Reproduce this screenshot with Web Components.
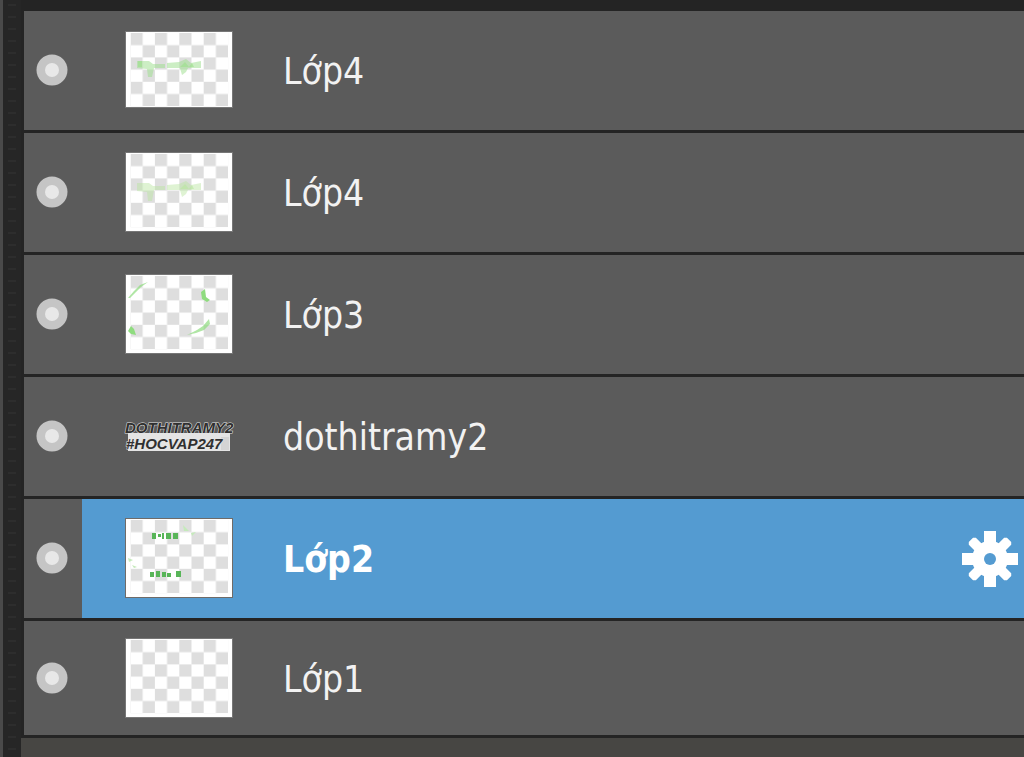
<!DOCTYPE html>
<html lang="vi">
<head>
<meta charset="utf-8">
<title>Layers</title>
<style>
    body {
        margin: 0;
        background: #262626;
    }
</style>
</head>
<body>
<layer-panel>
    <layer-row label="Lớp4">
        <layer-thumb slot="thumb" short>
            <svg viewBox="0 0 106 78" fill="#9bdf8b">
                <g opacity=".5">
                    <path d="M11 29h12l4 3h12v4H28l-2 9h-4l-1-8-10-1z"/>
                    <path d="M41 31l12-1 7-3 5 4 10-2v7H62l-2 4-4 3-2-7H41z"/>
                </g>
                <path d="M54 35l5-5 4 5 3-4 2 4zM12 29h4v6h-4z" opacity=".6"/>
            </svg>
        </layer-thumb>
    </layer-row>
    <layer-row label="Lớp4">
        <layer-thumb slot="thumb">
            <svg viewBox="0 0 106 78" fill="#b9e6a0">
                <g opacity=".45">
                    <path d="M11 30h12l4 3h12v4H28l-2 11h-4l-1-9-10-1z"/>
                    <path d="M41 32l12-1 7-3 5 4 10-2v7H62l-2 4-4 3-2-7H41z"/>
                </g>
                <path d="M54 36l5-5 4 5 3-4 2 4z" opacity=".6"/>
            </svg>
        </layer-thumb>
    </layer-row>
    <layer-row label="Lớp3">
        <layer-thumb slot="thumb">
            <svg viewBox="0 0 106 78" fill="#8fdc7f">
                <path d="M2 23l6-7 6-6 8-3-7 5-5 5-6 6z" opacity=".7"/>
                <path d="M75 17l4-3 1 8 4 3-3 2-5-3z"/>
                <path d="M2 56l3-5 3 3 2 6-5-1z"/>
                <path d="M61 60l10-5 6-4 6-7 1 5-6 6-8 3z" opacity=".7"/>
            </svg>
        </layer-thumb>
    </layer-row>
    <layer-row label="dothitramy2">
        <layer-thumb slot="thumb" wordart></layer-thumb>
    </layer-row>
    <layer-row label="Lớp2" selected>
        <layer-thumb slot="thumb" framed>
            <svg viewBox="0 0 106 78" fill="#58b558">
                <path d="M26 14h4v6h-4zM32 15h3v3h-3zM36 14h2v6h-2zM40 14h5v6h-5zM47 14h5v6h-5z"/>
                <path d="M24 53h4v5h-4zM30 52h4v6h-4zM36 53h4v5h-4zM41 54h4v4h-4zM50 52h5v6h-5z"/>
                <path d="M57 6l6 6h-5zM65 14l5-1-4 4zM2 39l5 2-4 2zM6 46l5 2-3 1z" fill="#c5eabb"/>
            </svg>
        </layer-thumb>
    </layer-row>
    <layer-row label="Lớp1">
        <layer-thumb slot="thumb"></layer-thumb>
    </layer-row>
</layer-panel>

<template id="panel-template">
<style>
    :host {
        display: grid;
        grid-template-columns: 21px 1fr;
        min-height: 100vh;
        font-family: "DejaVu Sans Condensed", "DejaVu Sans", sans-serif;
        font-size: 37px;
        line-height: 44px;
        color: #f2f2f2;
    }
    .grip {
        border-left: 3px solid #4a4a4a;
        background: repeating-linear-gradient(#262626 0 4px, #2d2d2d 4px 6px, #262626 6px 12px) 5px 0 / 8px 100% no-repeat #262626;
    }
    .main {
        display: flex;
        flex-direction: column;
    }
    .rows {
        padding: 11px 0 0 3px;
        background: #242424;
    }
    .footer {
        flex: 1;
        background: #474643;
    }
</style>
<div class="grip"></div>
<div class="main">
    <div class="rows"><slot></slot></div>
    <div class="footer"></div>
</div>
</template>

<template id="row-template">
<style>
    :host {
        display: grid;
        grid-template-columns: 58px 1fr;
        height: 119px;
        border-bottom: 3px solid #242424;
        background: #5b5b5b;
    }
    :host(:last-child) {
        height: 114px;
    }
    :host(:last-child) .eye,
    :host(:last-child) .body {
        padding-bottom: 0;
    }
    button {
        padding: 0;
        border: 0;
        background: none;
        color: inherit;
        font: inherit;
    }
    .eye {
        display: grid;
        place-items: center;
        padding: 0 2px 2px 0;
    }
    .eye svg {
        width: 32px;
        height: 32px;
    }
    .body {
        display: flex;
        align-items: center;
        padding: 0 0 2px 43px;
    }
    .name {
        flex: 1;
        align-self: stretch;
        padding: 4px 0 0 50px;
        text-align: left;
    }
    .gear {
        display: none;
        padding: 2px 6px 0 0;
    }
    .gear svg {
        display: block;
        width: 56px;
        height: 56px;
    }
    :host([selected]) .body {
        background: #549bd1;
        color: #fff;
    }
    :host([selected]) .name {
        font-weight: bold;
    }
    :host([selected]) .gear {
        display: block;
    }
</style>
<button class="eye" type="button" aria-label="Visible">
    <svg viewBox="0 0 32 32">
        <circle cx="16" cy="16" r="15.5" fill="#c5c5c5"/>
        <circle cx="16" cy="16" r="7" fill="#e8e8e8"/>
    </svg>
</button>
<div class="body">
    <slot name="thumb"></slot>
    <button class="name" type="button"></button>
    <button class="gear" type="button" aria-label="Settings">
        <svg viewBox="-28 -28 56 56">
            <g fill="#fff">
                <path d="M-6-28H6V28H-6zM-28-6V6H28V-6z"/>
                <path d="M-5-25l2-2h6l2 2V25l-2 2h-6l-2-2zM-25-5l-2 2v6l2 2H25l2-2v-6l-2-2z" transform="rotate(45)"/>
                <circle r="18"/>
            </g>
            <circle r="6" fill="#549bd1"/>
        </svg>
    </button>
</div>
</template>

<template id="thumb-template">
<style>
    :host {
        display: grid;
        width: 108px;
        height: 80px;
        box-sizing: border-box;
        border: 1px solid #777;
        overflow: hidden;
    }
    :host([short]) {
        height: 77px;
    }
    :host([framed]) {
        border-color: #6f6b68;
    }
    svg, ::slotted(svg) {
        grid-area: 1 / 1;
        display: block;
        width: 106px;
        height: 78px;
    }
    .art {
        display: none;
    }
    :host([wordart]) {
        height: 34px;
        border-color: transparent;
        overflow: visible;
    }
    :host([wordart]) .checker {
        display: none;
    }
    :host([wordart]) .art {
        display: block;
        height: 32px;
        overflow: visible;
    }
</style>
<svg class="checker" viewBox="0 0 106 78">
    <defs>
        <pattern id="check" x="4.5" y="1" width="24.4" height="24.4" patternUnits="userSpaceOnUse">
            <path d="M0 0h12.2v12.2H0zM12.2 12.2h12.2v12.2H12.2z" fill="#dedede"/>
        </pattern>
    </defs>
    <rect width="106" height="78" fill="#fff"/>
    <rect x="4.5" y="1" width="97.6" height="73.2" fill="url(#check)"/>
</svg>
<slot></slot>
<svg class="art" viewBox="0 0 106 32" font-family="Liberation Sans" font-weight="bold" font-style="italic" fill="#303030" stroke="#e4e4e4" paint-order="stroke">
    <path d="M2 13h102v18H2z" fill="#e4e4e4" stroke="none"/>
    <path d="M95 17h8v13h-8z" fill="#d4d4d4" stroke="none"/>
    <text x="-1" y="13" font-size="15">DOTHITRAMY2</text>
    <text x="0" y="29" font-size="15">#HOCVAP247</text>
</svg>
</template>

<script>
class LayerThumb extends HTMLElement {
    constructor() {
        super()
        this.root = this.attachShadow({ mode: 'open' });
        this.root.appendChild(document.getElementById('thumb-template').content.cloneNode(true));
        // only the text layer keeps the lettering
        if (!this.hasAttribute('wordart')) {
            this.root.querySelector('.art').remove();
        }
    }
}
window.customElements.define('layer-thumb', LayerThumb);

class LayerRow extends HTMLElement {
    constructor() {
        super()
        this.root = this.attachShadow({ mode: 'open' });
        this.root.appendChild(document.getElementById('row-template').content.cloneNode(true));
    }
    connectedCallback() {
        this.root.querySelector('.name').textContent = this.getAttribute('label');
    }
}
window.customElements.define('layer-row', LayerRow);

class LayerPanel extends HTMLElement {
    constructor() {
        super()
        this.root = this.attachShadow({ mode: 'open' });
        this.root.appendChild(document.getElementById('panel-template').content.cloneNode(true));
    }
}
window.customElements.define('layer-panel', LayerPanel);
</script>
</body>
</html>
